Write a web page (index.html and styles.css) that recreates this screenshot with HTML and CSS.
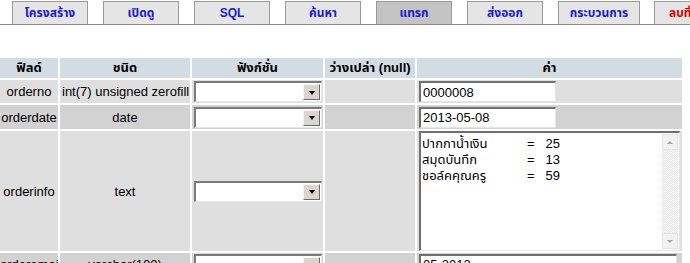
FILE: index.html
```html
<!DOCTYPE html>
<html lang="th">
<head>
<meta charset="utf-8">
<title>แทรก</title>
<link rel="stylesheet" href="styles.css">
</head>
<body>
<ul class="tabs">
  <li class="tab">โครงสร้าง</li>
  <li class="tab">เปิดดู</li>
  <li class="tab">SQL</li>
  <li class="tab">ค้นหา</li>
  <li class="tab active">แทรก</li>
  <li class="tab">ส่งออก</li>
  <li class="tab wide">กระบวนการ</li>
  <li class="tab danger">ลบทิ้ง</li>
</ul>
<table class="grid">
  <thead>
    <tr class="head">
      <th class="c-field">ฟิลด์</th>
      <th class="c-type">ชนิด</th>
      <th class="c-func">ฟังก์ชั่น</th>
      <th class="c-null">ว่างเปล่า (null)</th>
      <th class="c-val">ค่า</th>
    </tr>
  </thead>
  <tbody>
    <tr class="row odd r1">
      <td class="field">orderno</td>
      <td class="type">int(7) unsigned zerofill</td>
      <td><div class="sel"><span class="sel-box"></span><span class="sel-btn"><i class="tri"></i></span></div></td>
      <td></td>
      <td><input class="inp" type="text" value="0000008"></td>
    </tr>
    <tr class="row even r2">
      <td class="field">orderdate</td>
      <td class="type">date</td>
      <td><div class="sel"><span class="sel-box"></span><span class="sel-btn"><i class="tri"></i></span></div></td>
      <td></td>
      <td><input class="inp" type="text" value="2013-05-08"></td>
    </tr>
    <tr class="row odd r3">
      <td class="field">orderinfo</td>
      <td class="type">text</td>
      <td><div class="sel"><span class="sel-box"></span><span class="sel-btn"><i class="tri"></i></span></div></td>
      <td></td>
      <td class="tacell">
        <div class="ta">
          <textarea class="ta-text">ปากกาน้ำเงิน	=   25
สมุดบันทึก	=   13
ชอล์คคุณครู	=   59</textarea>
          <div class="sb">
            <span class="sb-btn"><i class="sb-up"></i></span>
            <span class="sb-track"></span>
            <span class="sb-btn"><i class="sb-down"></i></span>
          </div>
        </div>
      </td>
    </tr>
    <tr class="row even r4">
      <td class="field">orderemail</td>
      <td class="type">varchar(100)</td>
      <td><div class="sel"><span class="sel-box"></span><span class="sel-btn"><i class="tri"></i></span></div></td>
      <td></td>
      <td><input class="inp long" type="text" value="05-2013"></td>
    </tr>
  </tbody>
</table>
</body>
</html>
```
FILE: styles.css
```css
html, body {
  margin: 0;
  background: #ffffff;
  overflow: hidden;
}
body {
  font-family: "Liberation Sans", "Noto Sans Thai", "Tahoma", "DejaVu Sans", sans-serif;
  font-size: 13px;
  color: #000;
}

/* ---------- tabs ---------- */
.tabs {
  display: flex;
  gap: 15px;
  list-style: none;
  margin: 0;
  padding: 1px 0 0 12px;
  border-bottom: 1px solid #8a8a8a;
  white-space: nowrap;
}
.tab {
  flex: none;
  box-sizing: border-box;
  width: 76px;
  height: 23px;
  border: 1px solid #9a9a9a;
  border-bottom: none;
  background: #e5e5e5;
  color: #1a1acc;
  font-weight: bold;
  font-size: 12px;
  display: flex;
  align-items: center;
  justify-content: center;
}
.tab.active { background: #c4c4c4; }
.tab.wide { width: 82px; margin-right: -1px; }
.tab.danger { color: #dd0000; justify-content: flex-start; padding-left: 14px; }

/* ---------- table ---------- */
.grid {
  width: 686px;
  margin: 31px 0 0 -2px;
  border-spacing: 2px;
  table-layout: fixed;
}
.grid th, .grid td {
  padding: 0 2px;
  vertical-align: middle;
  white-space: nowrap;
  overflow: hidden;
}
.c-field { width: 54px; }
.c-type  { width: 126px; }
.c-func  { width: 127px; }
.c-null  { width: 86px; }
.c-val   { width: 261px; }

.head th {
  height: 20px;
  background: #d3dce3;
  font-weight: bold;
  font-size: 13px;
  text-align: center;
}
.row.odd td  { background: #dfdfdf; }
.row.even td { background: #d2d2d2; }
.r1 td { height: 23px; }
.r2 td { height: 24px; }
.r3 td { height: 120px; }
.r4 td { height: 22px; }

.field { text-align: center; padding: 0 !important; }
.type  { text-align: center; }

/* ---------- select imitation ---------- */
.sel {
  box-sizing: border-box;
  width: 128px;
  height: 21px;
  display: flex;
  background: #fff;
  border-top: 2px solid #7a7a7a;
  border-left: 2px solid #7a7a7a;
  border-right: 1px solid #e8e8e8;
  border-bottom: 1px solid #e8e8e8;
}
.sel-box { flex: 1; }
.sel-btn {
  box-sizing: border-box;
  width: 17px;
  margin: 1px;
  background: #d8d6cf;
  border-top: 1px solid #f4f4f4;
  border-left: 1px solid #f4f4f4;
  border-right: 1px solid #6c6c6c;
  border-bottom: 1px solid #6c6c6c;
  display: flex;
  align-items: center;
  justify-content: center;
}
.tri {
  width: 0;
  height: 0;
  border-left: 3.5px solid transparent;
  border-right: 3.5px solid transparent;
  border-top: 4px solid #000;
  margin-top: 1px;
}

/* ---------- inputs ---------- */
.inp {
  box-sizing: border-box;
  width: 137px;
  height: 21px;
  margin: 0;
  padding: 0 2px;
  font-family: inherit;
  font-size: 13px;
  color: #000;
  background: #fff;
  border-top: 2px solid #6f6f6f;
  border-left: 2px solid #6f6f6f;
  border-right: 1px solid #e4e4e4;
  border-bottom: 1px solid #e4e4e4;
  outline: none;
}
.inp.long { width: 258px; }

/* ---------- textarea ---------- */
.tacell { padding: 0 2px !important; }
.ta {
  box-sizing: border-box;
  width: 261px;
  height: 120px;
  display: flex;
  background: #fff;
  border-top: 2px solid #6f6f6f;
  border-left: 2px solid #6f6f6f;
  border-right: 1px solid #e4e4e4;
  border-bottom: 1px solid #e4e4e4;
}
.ta-text {
  flex: 1;
  min-width: 0;
  margin: 0;
  padding: 3px 1px;
  border: none;
  outline: none;
  resize: none;
  overflow: hidden;
  font-family: inherit;
  font-size: 13px;
  line-height: 16px;
  color: #000;
  tab-size: 105px;
  white-space: pre;
  background: #fff;
}
.sb {
  width: 16px;
  margin: 1px 1px 1px 0;
  display: flex;
  flex-direction: column;
}
.sb-btn {
  height: 16px;
  box-sizing: border-box;
  background: #f2f2f2;
  border: 1px solid #e2e2e2;
  display: flex;
  align-items: center;
  justify-content: center;
}
.sb-track {
  flex: 1;
  background: repeating-conic-gradient(#ffffff 0 25%, #e2e2e2 0 50%) 0 0 / 2px 2px;
}
.sb-up {
  width: 0; height: 0;
  border-left: 3px solid transparent;
  border-right: 3px solid transparent;
  border-bottom: 3px solid #a8a8a8;
}
.sb-down {
  width: 0; height: 0;
  border-left: 3px solid transparent;
  border-right: 3px solid transparent;
  border-top: 3px solid #a8a8a8;
}
```
